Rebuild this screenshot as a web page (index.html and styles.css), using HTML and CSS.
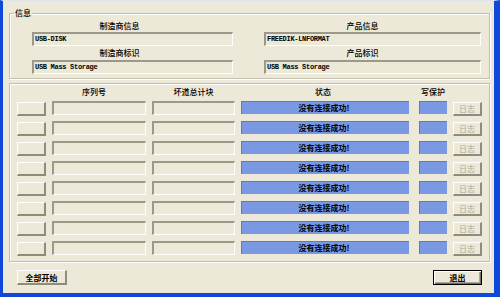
FILE: index.html
```html
<!DOCTYPE html>
<html lang="zh-CN">
<head>
<meta charset="utf-8">
<title>USB</title>
<link rel="stylesheet" href="styles.css">
</head>
<body>
<div class="window">
  <div class="group info">
    <span class="legend">信息</span>
    <div class="info-grid">
      <div class="lbl first left">制造商信息</div>
      <div class="lbl first right">产品信息</div>
      <div class="tb">USB-DISK</div>
      <div class="tb">FREEDIK-LNFORMAT</div>
      <div class="lbl left">制造商标识</div>
      <div class="lbl right">产品标识</div>
      <div class="tb">USB Mass Storage</div>
      <div class="tb">USB Mass Storage</div>
    </div>
  </div>

  <div class="group devices">
    <div class="dev-head">
      <div></div>
      <div class="hdr serial-hdr">序列号</div>
      <div class="hdr">坏道总计块</div>
      <div class="hdr status-hdr">状态</div>
      <div class="hdr wp-hdr">写保护</div>
      <div></div>
    </div>
    <div class="dev-rows">
      <button class="rbtn"></button><div class="tb"></div><div class="tb"></div><div class="status">没有连接成功!</div><div class="wp"></div><button class="log">日志</button>
      <button class="rbtn"></button><div class="tb"></div><div class="tb"></div><div class="status">没有连接成功!</div><div class="wp"></div><button class="log">日志</button>
      <button class="rbtn"></button><div class="tb"></div><div class="tb"></div><div class="status">没有连接成功!</div><div class="wp"></div><button class="log">日志</button>
      <button class="rbtn"></button><div class="tb"></div><div class="tb"></div><div class="status">没有连接成功!</div><div class="wp"></div><button class="log">日志</button>
      <button class="rbtn"></button><div class="tb"></div><div class="tb"></div><div class="status">没有连接成功!</div><div class="wp"></div><button class="log">日志</button>
      <button class="rbtn"></button><div class="tb"></div><div class="tb"></div><div class="status">没有连接成功!</div><div class="wp"></div><button class="log">日志</button>
      <button class="rbtn"></button><div class="tb"></div><div class="tb"></div><div class="status">没有连接成功!</div><div class="wp"></div><button class="log">日志</button>
      <button class="rbtn"></button><div class="tb"></div><div class="tb"></div><div class="status">没有连接成功!</div><div class="wp"></div><button class="log">日志</button>
    </div>
  </div>

  <div class="footer">
    <button class="btn">全部开始</button>
    <button class="btn default">退出</button>
  </div>
</div>
</body>
</html>
```

FILE: styles.css
```css
* { box-sizing: border-box; }
html, body { margin: 0; padding: 0; }
body {
  width: 500px;
  height: 297px;
  overflow: hidden;
  background: #ece9d8;
  font-family: "Noto Sans CJK SC", "Liberation Sans", sans-serif;
  font-size: 8px;
  color: #000;
}
.window {
  width: 500px;
  height: 297px;
  background: #ece9d8;
  border-left: 3px solid #1048dc;
  border-right: 6px solid #1048dc;
  border-bottom: 4px solid #1048dc;
  border-top: 1px solid #dfe4ef;
  padding-top: 12px;
  display: flex;
  flex-direction: column;
}
.group {
  position: relative;
  margin-left: 6px;
  width: 481px;
  border: 1px solid #c3c0b0;
  box-shadow: inset 1px 1px 0 #fff, 1px 1px 0 #fff;
}
.legend {
  position: absolute;
  top: -7px;
  left: 4px;
  padding: 0 1px;
  background: #ece9d8;
  line-height: 12px;
  font-weight: 500;
}
.info-grid {
  display: grid;
  grid-template-columns: 201px 217px;
  column-gap: 31px;
  padding: 4px 0 4px 22px;
}
.lbl {
  height: 14px;
  line-height: 14px;
  text-align: center;
  font-weight: 500;
}
.lbl.left { padding-right: 26px; }
.lbl.right { padding-right: 20px; }
.lbl.first { padding-top: 1px; }
.tb {
  height: 14px;
  background: #ece9d8;
  border-top: 2px solid #9b998b;
  border-left: 2px solid #9b998b;
  border-right: 1px solid #fff;
  border-bottom: 1px solid #fff;
  font-family: "Liberation Mono", "DejaVu Sans Mono", monospace;
  font-weight: bold;
  font-size: 7px;
  letter-spacing: -0.3px;
  line-height: 11px;
  padding-left: 1px;
  white-space: nowrap;
  overflow: hidden;
}
.info { margin-bottom: 4px; }
.devices {
  padding: 1px 0 6px 7px;
}
.dev-head, .dev-rows {
  display: grid;
  grid-template-columns: 29px 94px 83px 168px 32px 29px;
  column-gap: 6px;
}
.dev-head {
  height: 14px;
  margin-bottom: 2px;
  line-height: 14px;
  text-align: center;
  font-weight: 500;
}
.serial-hdr { padding-right: 10px; }
.status-hdr { padding-right: 4px; }
.wp-hdr { padding-left: 4px; }
.dev-rows {
  grid-auto-rows: 14px;
  row-gap: 6px;
}
button {
  font: inherit;
  margin: 0;
  padding: 0;
  color: inherit;
}
.rbtn, .log, .btn {
  background: #ece9d8;
  border-top: 1px solid #fff;
  border-left: 1px solid #fff;
  border-right: 2px solid #8e8c7f;
  border-bottom: 2px solid #8e8c7f;
  height: 14px;
}
.rbtn { margin-top: 1px; }
.status, .wp {
  background: #7b98e3;
  border-top: 1px solid #5e79c4;
  border-left: 1px solid #5e79c4;
  height: 13px;
}
.status {
  font-weight: bold;
  text-align: center;
  line-height: 11px;
  padding-right: 3px;
}
.wp {
  margin-left: 4px;
  width: 28px;
}
.log {
  color: #aca899;
  line-height: 10px;
  margin-top: 1px;
}
.footer {
  display: flex;
  justify-content: space-between;
  padding: 0 12px 0 14px;
  margin-top: 8px;
}
.btn {
  width: 50px;
  height: 15px;
  line-height: 11px;
  font-weight: bold;
}
.btn.default {
  width: 49px;
  border: 1px solid #000;
  box-shadow: inset 1px 1px 0 #fff, inset -1px -1px 0 #716f64, inset -2px -2px 0 #aca899;
}
```
